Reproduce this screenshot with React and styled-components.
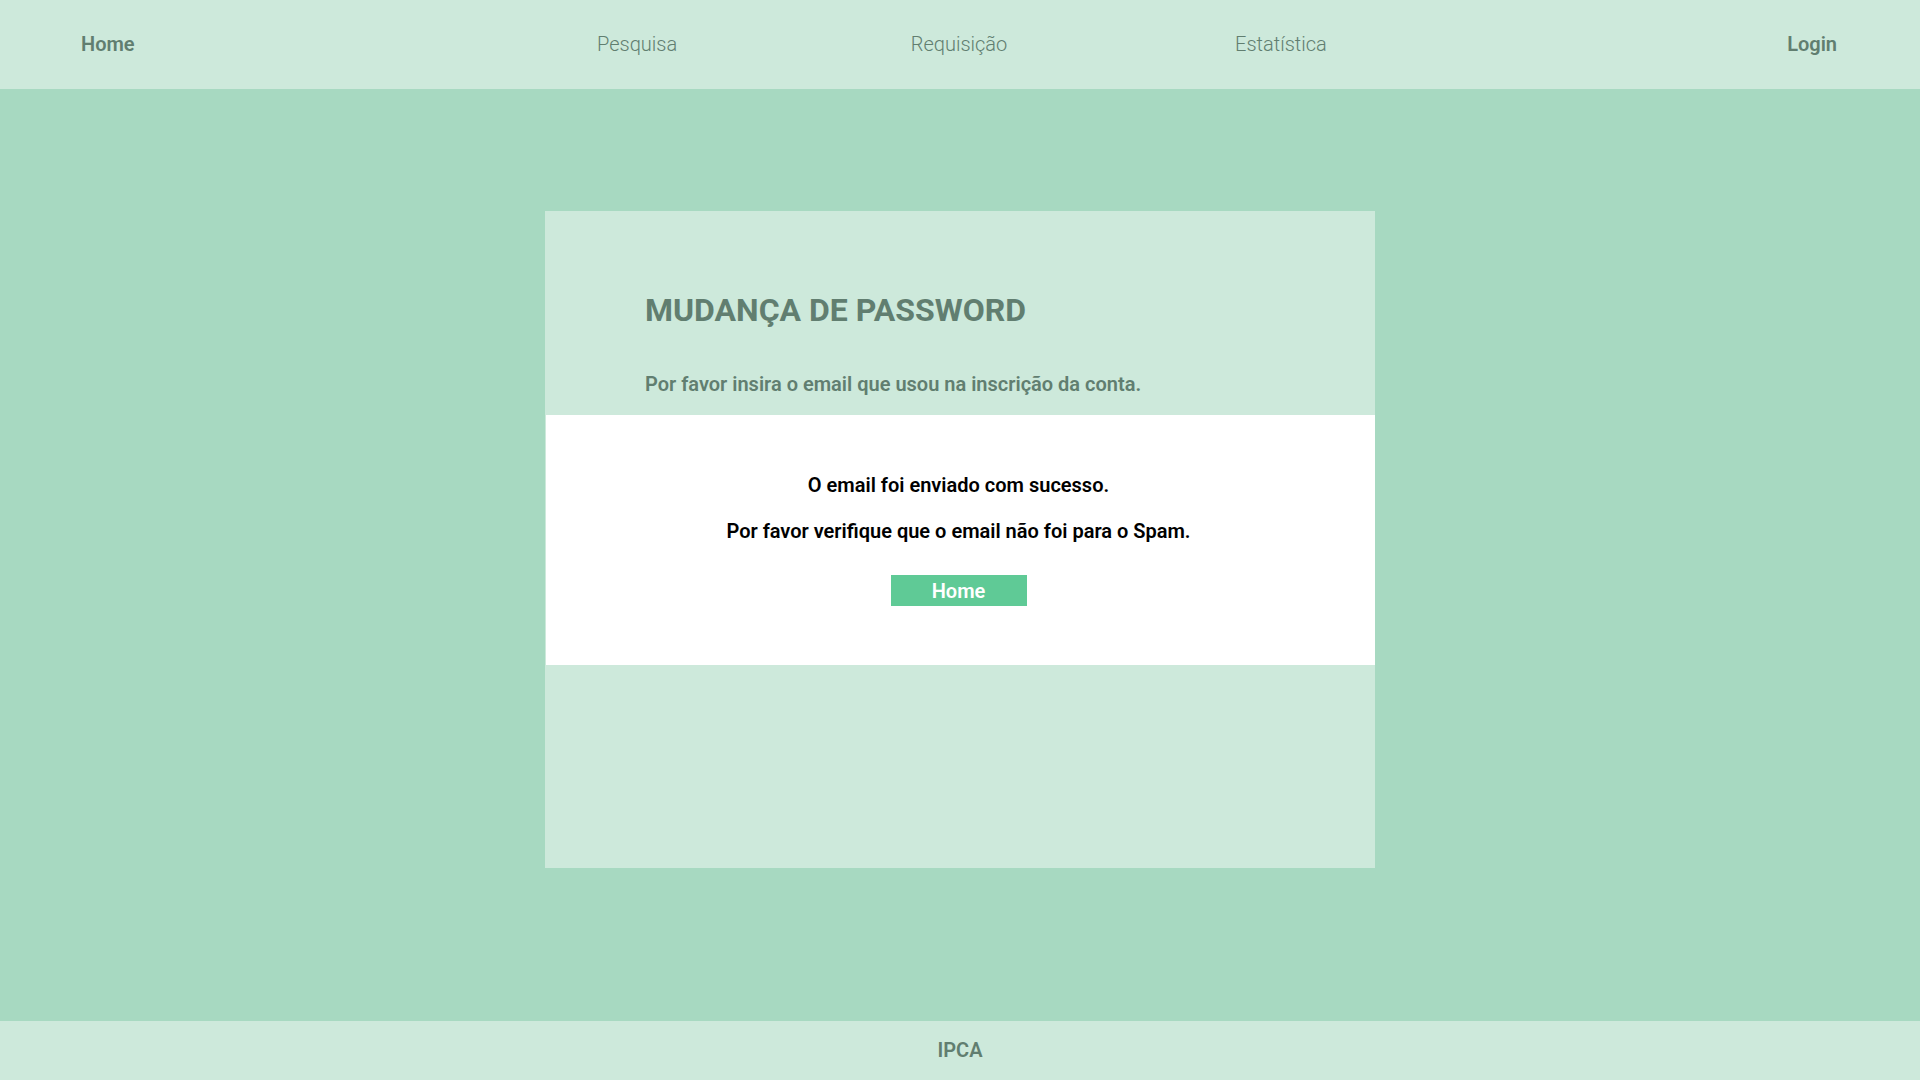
import React from "react";
import styled, { createGlobalStyle } from "styled-components";

const GlobalStyle = createGlobalStyle`
  * { box-sizing: border-box; }
  body { margin: 0; font-family: Roboto, "Liberation Sans", sans-serif; font-size: 20px; line-height: 24px; }
`;

const Page = styled.div`
  min-height: 100vh;
  display: flex;
  flex-direction: column;
  background: #a7d9c1;
  color: #617e70;
`;

const Header = styled.header`
  display: grid;
  grid-template-columns: 1fr 55% 1fr;
  align-items: center;
  padding: 32px 83px 33px 81px;
  background: #cde9db;
`;

const Menu = styled.nav`
  display: grid;
  grid-template-columns: repeat(3, 1fr);
  justify-items: center;
`;

const NavLink = styled.a`
  color: inherit;
  text-decoration: none;
  font-weight: 300;
`;

const EdgeLink = styled(NavLink)`
  justify-self: ${(p) => (p.$end ? "end" : "start")};
  font-weight: 600;
`;

const Main = styled.main`
  flex: 1;
  display: flex;
  flex-direction: column;
  align-items: center;
  padding: 122px 24px;
`;

const Card = styled.section`
  width: 100%;
  max-width: 830px;
  padding: 80px 0 203px;
  border-left: 1px solid #cde9db;
  background: #cde9db;
`;

const Intro = styled.div`
  padding: 0 99px 19px;
`;

const Title = styled.h1`
  margin: 0 0 43px;
  font-size: 32px;
  line-height: 38px;
  font-weight: 700;
`;

const Text = styled.p`
  margin: 0;
  font-weight: 600;
`;

const Notice = styled.div`
  display: flex;
  flex-direction: column;
  align-items: center;
  gap: 22px;
  padding: 58px 4px 59px 0;
  background: #fff;
  color: #000;
`;

const HomeButton = styled.button`
  width: 136px;
  height: 31px;
  margin-top: 10px;
  padding: 0;
  border: 0;
  background: #5fca96;
  color: #fff;
  font: inherit;
  font-weight: 600;
  cursor: pointer;
`;

const Footer = styled.footer`
  padding: 17px 0 18px;
  background: #cde9db;
  text-align: center;
  font-weight: 600;
`;

export default function App() {
  return (
    <Page>
      <GlobalStyle />
      <Header>
        <EdgeLink href="#home">Home</EdgeLink>
        <Menu>
          <NavLink href="#pesquisa">Pesquisa</NavLink>
          <NavLink href="#requisicao">Requisição</NavLink>
          <NavLink href="#estatistica">Estatística</NavLink>
        </Menu>
        <EdgeLink href="#login" $end>Login</EdgeLink>
      </Header>
      <Main>
        <Card>
          <Intro>
            <Title>MUDANÇA DE PASSWORD</Title>
            <Text>Por favor insira o email que usou na inscrição da conta.</Text>
          </Intro>
          <Notice role="status">
            <Text>O email foi enviado com sucesso.</Text>
            <Text>Por favor verifique que o email não foi para o Spam.</Text>
            <HomeButton type="button">Home</HomeButton>
          </Notice>
        </Card>
      </Main>
      <Footer>IPCA</Footer>
    </Page>
  );
}
